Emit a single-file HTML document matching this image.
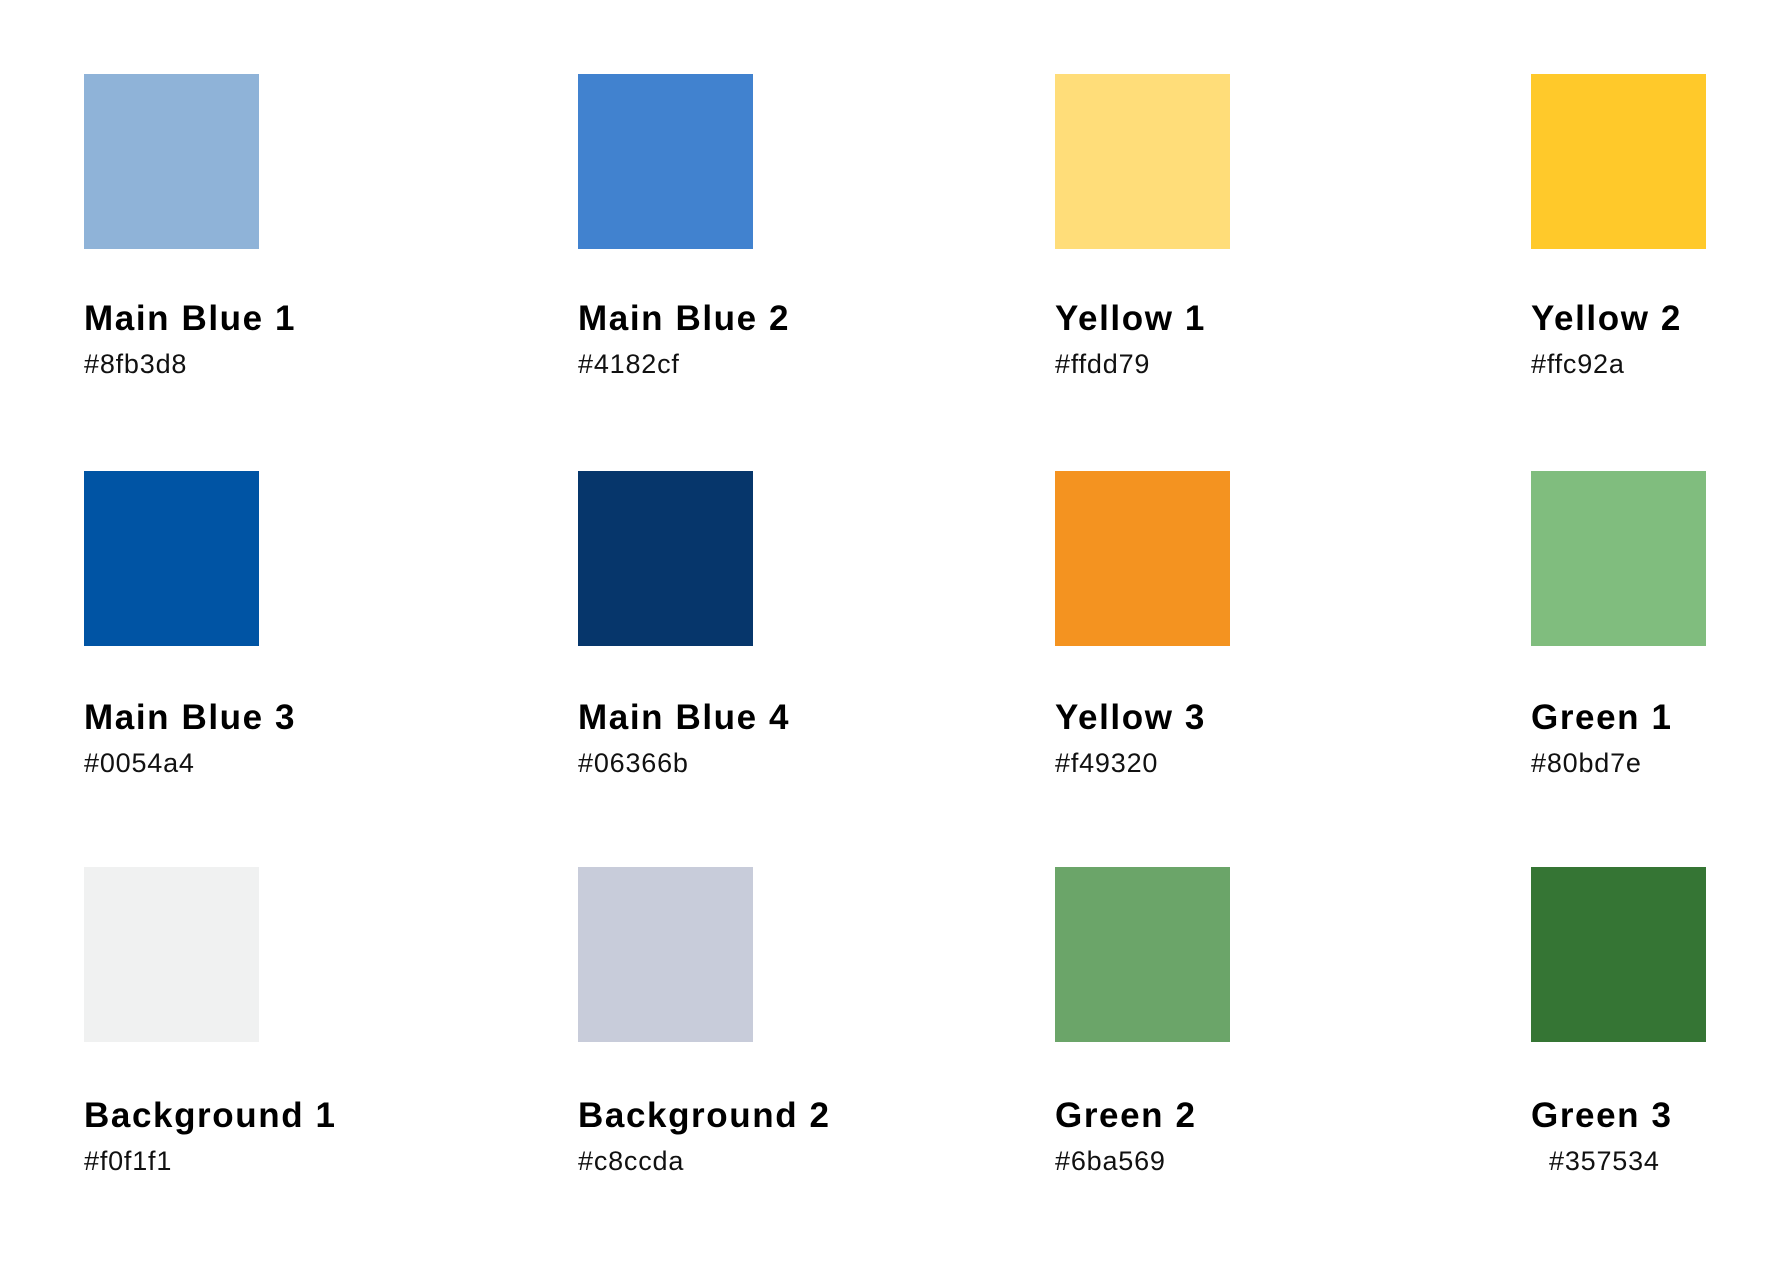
<!DOCTYPE html>
<html><head><meta charset="utf-8"><style>
html,body{margin:0;padding:0;background:#fff;width:1790px;height:1264px;overflow:hidden;font-family:"Liberation Sans",sans-serif;}
.c{position:absolute;}
.sw{width:175px;height:175px;}
.t{position:absolute;left:0;font-weight:bold;font-size:35px;line-height:35px;letter-spacing:1.6px;color:#000;white-space:nowrap;}
.h{position:absolute;left:0;font-size:27px;line-height:27px;letter-spacing:0.8px;color:#111;white-space:nowrap;}
.r1 .t{top:227px}.r1 .h{top:277px}
.r2 .t{top:229px}.r2 .h{top:279px}
.r3 .t{top:231px}.r3 .h{top:281px}
</style></head><body>
<div class="c r1" style="left:84px;top:74px"><div class="sw" style="background:#8fb3d8"></div><div class="t">Main Blue 1</div><div class="h">#8fb3d8</div></div>
<div class="c r1" style="left:578px;top:74px"><div class="sw" style="background:#4182cf"></div><div class="t">Main Blue 2</div><div class="h">#4182cf</div></div>
<div class="c r1" style="left:1055px;top:74px"><div class="sw" style="background:#ffdd79"></div><div class="t">Yellow 1</div><div class="h">#ffdd79</div></div>
<div class="c r1" style="left:1531px;top:74px"><div class="sw" style="background:#ffc92a"></div><div class="t">Yellow 2</div><div class="h">#ffc92a</div></div>

<div class="c r2" style="left:84px;top:471px"><div class="sw" style="background:#0054a4"></div><div class="t">Main Blue 3</div><div class="h">#0054a4</div></div>
<div class="c r2" style="left:578px;top:471px"><div class="sw" style="background:#06366b"></div><div class="t">Main Blue 4</div><div class="h">#06366b</div></div>
<div class="c r2" style="left:1055px;top:471px"><div class="sw" style="background:#f49320"></div><div class="t">Yellow 3</div><div class="h">#f49320</div></div>
<div class="c r2" style="left:1531px;top:471px"><div class="sw" style="background:#80bd7e"></div><div class="t">Green 1</div><div class="h">#80bd7e</div></div>

<div class="c r3" style="left:84px;top:867px"><div class="sw" style="background:#f0f1f1"></div><div class="t">Background 1</div><div class="h">#f0f1f1</div></div>
<div class="c r3" style="left:578px;top:867px"><div class="sw" style="background:#c8ccda"></div><div class="t">Background 2</div><div class="h">#c8ccda</div></div>
<div class="c r3" style="left:1055px;top:867px"><div class="sw" style="background:#6ba569"></div><div class="t">Green 2</div><div class="h">#6ba569</div></div>
<div class="c r3" style="left:1531px;top:867px"><div class="sw" style="background:#357534"></div><div class="t">Green 3</div><div class="h" style="left:18px">#357534</div></div>
</body></html>
